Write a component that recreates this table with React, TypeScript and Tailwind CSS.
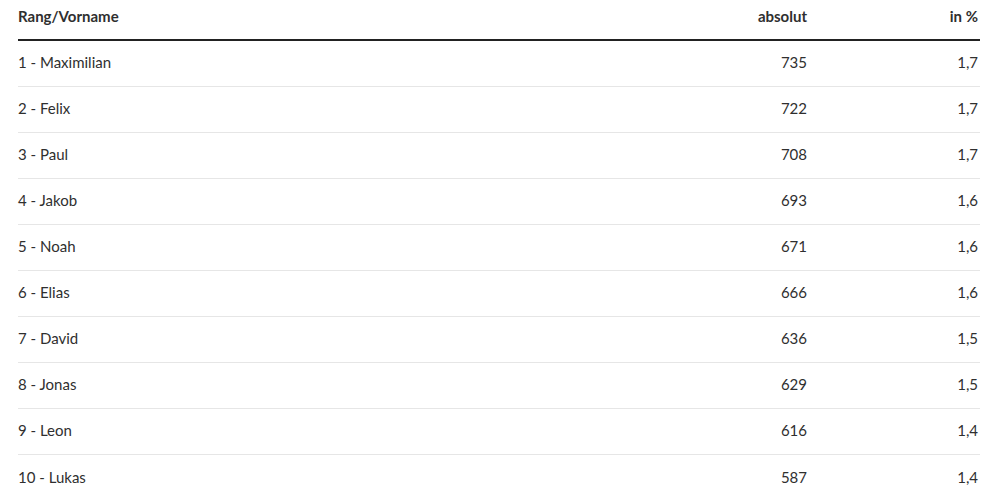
const rows: [string, string, string][] = [
  ["1 - Maximilian", "735", "1,7"],
  ["2 - Felix", "722", "1,7"],
  ["3 - Paul", "708", "1,7"],
  ["4 - Jakob", "693", "1,6"],
  ["5 - Noah", "671", "1,6"],
  ["6 - Elias", "666", "1,6"],
  ["7 - David", "636", "1,5"],
  ["8 - Jonas", "629", "1,5"],
  ["9 - Leon", "616", "1,4"],
  ["10 - Lukas", "587", "1,4"],
];

export default function App() {
  return (
    <div className="min-h-screen bg-white pl-[18px] pr-[12px] text-[#2f2f2f] font-['Lato','Liberation_Sans',sans-serif] text-[15px]">
      {/* Kopfzeile */}
      <div className="grid grid-cols-[1fr_150px_173px] h-[41px] border-b-2 border-[#222222] font-bold leading-5 pt-[6px]">
        <div>Rang/Vorname</div>
        <div className="text-right">absolut</div>
        <div className="text-right pr-[2px]">in %</div>
      </div>

      {rows.map(([name, abs, pct], i) => (
        <div
          key={name}
          className={`grid grid-cols-[1fr_150px_173px] items-center h-[46px] pb-[3px] leading-5 ${
            i < rows.length - 1 ? "border-b border-[#e6e6e6]" : ""
          }`}
        >
          <div>{name}</div>
          <div className="text-right">{abs}</div>
          <div className="text-right pr-[2px]">{pct}</div>
        </div>
      ))}
    </div>
  );
}
